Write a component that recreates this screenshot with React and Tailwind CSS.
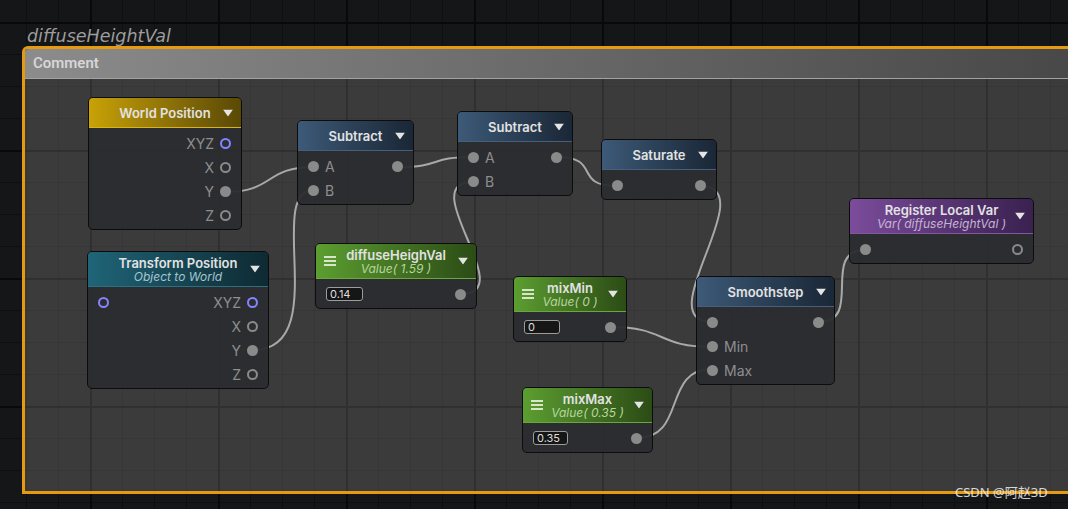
import React from "react";

// port dots: fill = connected, ring = free, purple = vector ring
const Port = ({ kind }) => {
  if (kind === "fill") return <span className="block w-[11px] h-[11px] rounded-full bg-[#8a8a8a] shrink-0" />;
  if (kind === "purple") return <span className="block w-[11px] h-[11px] rounded-full border-2 border-[#8484ff] shrink-0" />;
  return <span className="block w-[11px] h-[11px] rounded-full border-2 border-[#8a8a8a] shrink-0" />;
};

const Caret = () => (
  <svg width="10" height="7" viewBox="0 0 10 7" className="absolute right-[8px] top-1/2 -translate-y-1/2">
    <polygon points="0,0 10,0 5,7" fill="#e4e4e4" />
  </svg>
);

const Menu = () => (
  <div className="absolute left-[8px] top-1/2 -translate-y-1/2 flex flex-col gap-[2px]">
    <span className="block w-[12px] h-[2px] bg-[#d6e6c6]" />
    <span className="block w-[12px] h-[2px] bg-[#d6e6c6]" />
    <span className="block w-[12px] h-[2px] bg-[#d6e6c6]" />
  </div>
);

const headers = {
  gold: "bg-linear-to-r from-[#c9a206] to-[#5a4906] border-[#d8b414]",
  teal: "bg-linear-to-r from-[#1f6578] to-[#0e2a33] border-[#2a7082]",
  blue: "bg-linear-to-r from-[#3d5a78] to-[#1a2736] border-[#44607c]",
  green: "bg-linear-to-r from-[#5c9e30] to-[#2c4c16] border-[#6aa83c]",
  purple: "bg-linear-to-r from-[#7b4c9c] to-[#3a2150] border-[#84569f]",
};

const subColors = {
  teal: "text-[#a4c6cf]",
  green: "text-[#b6d69c]",
  purple: "text-[#c6b4d6]",
};

function Node({ pos, color, title, sub, menu, rows = [], field }) {
  return (
    <div className={`absolute ${pos} rounded-[5px] border border-[#0c0c0c] bg-[#2b2c30]/95 font-['Inter',sans-serif]`}>
      <div className={`relative flex flex-col items-center justify-center rounded-t-[4px] border-b ${sub ? "h-[35px]" : "h-[30px]"} ${headers[color]}`}>
        {menu && <Menu />}
        <span className="text-[13px] leading-[14px] font-semibold text-[#e2e2e2]">{title}</span>
        {sub && <span className={`text-[12px] leading-[13px] italic ${subColors[color]}`}>{sub}</span>}
        <Caret />
      </div>
      <div className="pt-[3px] pb-[2px]">
        {field && (
          <div className="flex items-center h-[24px] px-[10px]">
            <div className={`${field.w} h-[14px] rounded-[3px] border border-[#9c9c9c] bg-[#161616] pl-[3px] text-[11px] leading-[12px] text-[#dedede]`}>
              {field.v}
            </div>
            <div className="flex-1" />
            <Port kind="fill" />
          </div>
        )}
        {rows.map((r, i) => (
          <div key={i} className="flex items-center h-[24px] px-[10px] text-[14px] text-[#8e8e8e]">
            {r.in && <Port kind={r.in} />}
            {r.inLabel && <span className="ml-[6px]">{r.inLabel}</span>}
            <div className="flex-1" />
            {r.outLabel && <span className="mr-[6px]">{r.outLabel}</span>}
            {r.out && <Port kind={r.out} />}
          </div>
        ))}
      </div>
    </div>
  );
}

// [x1, y1, x2, y2, out tangent, in tangent]
const wires = [
  [225, 192, 314, 167, 50, 50],
  [253, 350, 314, 190, 80, 50],
  [398, 167, 473, 157, 45, 45],
  [461, 294, 473, 182, 60, 60],
  [557, 157, 617, 186, 45, 45],
  [700, 186, 712, 322, 65, 65],
  [611, 327, 712, 347, 55, 55],
  [637, 438, 712, 369, 50, 50],
  [819, 322, 865, 250, 45, 45],
];

const wirePath = ([x1, y1, x2, y2, a, b]) =>
  `M ${x1} ${y1} C ${x1 + a} ${y1}, ${x2 - b} ${y2}, ${x2} ${y2}`;

export default function App() {
  return (
    <div className="relative w-[1068px] h-[509px] overflow-hidden bg-[#151618] bg-[linear-gradient(to_right,#08090a_2px,transparent_2px),linear-gradient(to_bottom,#08090a_2px,transparent_2px),linear-gradient(to_right,#0e0f11_1px,transparent_1px),linear-gradient(to_bottom,#0e0f11_1px,transparent_1px)] bg-size-[128px_128px,128px_128px,32px_32px,32px_32px] bg-position-[90px_22px] bg-fixed">
      {/* comment title */}
      <div className="absolute left-[27px] top-[25px] text-[17.5px] leading-[23px] italic text-[#9c9c9c] font-['DejaVu_Sans',sans-serif]">
        diffuseHeightVal
      </div>

      {/* comment frame */}
      <div className="absolute left-[22px] top-[46px] w-[1070px] h-[448px] border-[3px] border-[#e59a10] rounded-tl-[6px] flex flex-col overflow-hidden">
        <div className="h-[30px] shrink-0 flex items-center pl-[8px] bg-linear-to-r from-[#8c8c8c] to-[#474747] border-b border-[#a2a2a2]">
          <span className="text-[15px] font-semibold text-[#d6d6d6] font-['Roboto',sans-serif]">Comment</span>
        </div>
        <div className="flex-1 bg-[#3b3b3b] bg-[linear-gradient(to_right,#303030_2px,transparent_2px),linear-gradient(to_bottom,#303030_2px,transparent_2px),linear-gradient(to_right,#363636_1px,transparent_1px),linear-gradient(to_bottom,#363636_1px,transparent_1px)] bg-size-[128px_128px,128px_128px,32px_32px,32px_32px] bg-position-[90px_22px] bg-fixed" />
      </div>

      {/* wires */}
      <svg className="absolute inset-0" width="1068" height="509">
        {wires.map((w, i) => (
          <path key={i} d={wirePath(w)} fill="none" stroke="#a9a9a9" strokeWidth="2" />
        ))}
      </svg>

      <Node
        pos="left-[88px] top-[97px] w-[154px]"
        color="gold"
        title="World Position"
        rows={[
          { outLabel: "XYZ", out: "purple" },
          { outLabel: "X", out: "ring" },
          { outLabel: "Y", out: "fill" },
          { outLabel: "Z", out: "ring" },
        ]}
      />
      <Node
        pos="left-[87px] top-[251px] w-[182px]"
        color="teal"
        title="Transform Position"
        sub="Object to World"
        rows={[
          { in: "purple", outLabel: "XYZ", out: "purple" },
          { outLabel: "X", out: "ring" },
          { outLabel: "Y", out: "fill" },
          { outLabel: "Z", out: "ring" },
        ]}
      />
      <Node
        pos="left-[297px] top-[120px] w-[117px]"
        color="blue"
        title="Subtract"
        rows={[
          { in: "fill", inLabel: "A", out: "fill" },
          { in: "fill", inLabel: "B" },
        ]}
      />
      <Node
        pos="left-[457px] top-[111px] w-[116px]"
        color="blue"
        title="Subtract"
        rows={[
          { in: "fill", inLabel: "A", out: "fill" },
          { in: "fill", inLabel: "B" },
        ]}
      />
      <Node
        pos="left-[601px] top-[139px] w-[116px]"
        color="blue"
        title="Saturate"
        rows={[{ in: "fill", out: "fill" }]}
      />
      <Node
        pos="left-[315px] top-[243px] w-[162px]"
        color="green"
        menu
        title="diffuseHeighVal"
        sub="Value( 1.59 )"
        field={{ v: "0.14", w: "w-[37px]" }}
      />
      <Node
        pos="left-[513px] top-[276px] w-[114px]"
        color="green"
        menu
        title="mixMin"
        sub="Value( 0 )"
        field={{ v: "0", w: "w-[36px]" }}
      />
      <Node
        pos="left-[522px] top-[387px] w-[131px]"
        color="green"
        menu
        title="mixMax"
        sub="Value( 0.35 )"
        field={{ v: "0.35", w: "w-[35px]" }}
      />
      <Node
        pos="left-[696px] top-[276px] w-[139px]"
        color="blue"
        title="Smoothstep"
        rows={[
          { in: "fill", out: "fill" },
          { in: "fill", inLabel: "Min" },
          { in: "fill", inLabel: "Max" },
        ]}
      />
      <Node
        pos="left-[849px] top-[198px] w-[185px]"
        color="purple"
        title="Register Local Var"
        sub="Var( diffuseHeightVal )"
        rows={[{ in: "fill", out: "ring" }]}
      />

      {/* watermark */}
      <div className="absolute left-[955px] top-[483px] text-[13px] leading-[18px] text-white/80 font-['Noto_Sans','Noto_Sans_CJK_SC',sans-serif]">
        CSDN @阿赵3D
      </div>
    </div>
  );
}
